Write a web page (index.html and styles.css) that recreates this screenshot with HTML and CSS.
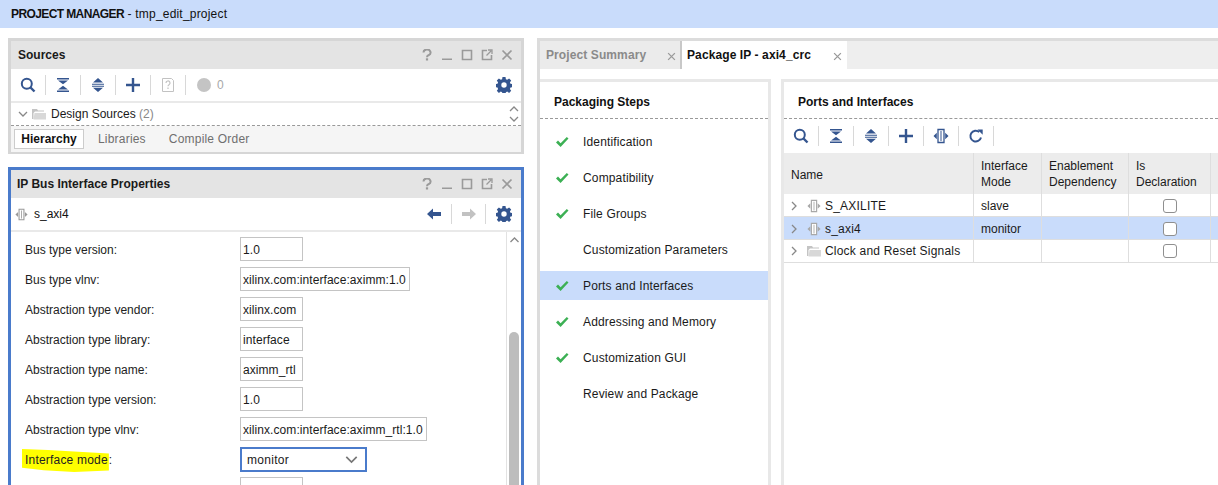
FILE: index.html
```html
<!DOCTYPE html>
<html lang="en">
<head>
  <meta charset="UTF-8" />
  <title>PROJECT MANAGER - tmp_edit_project</title>
  <link rel="stylesheet" href="styles.css">
</head>
<body>
  <svg class="defs" width="0" height="0">
    <symbol id="i-search" viewBox="0 0 16 16"><circle cx="6.8" cy="6.8" r="5" fill="none" stroke="currentColor" stroke-width="2"/><path d="M10.5 10.5l4 4" stroke="currentColor" stroke-width="2.4"/></symbol>
    <symbol id="i-collapse" viewBox="0 0 16 16"><path d="M2 1h12v1.6H2zM3 3.4h10L8 7.3zM8 8.7l5 3.900H3zM2 13.400h12V15H2z" fill="currentColor"/></symbol>
    <symbol id="i-expand" viewBox="0 0 16 16"><path d="M8 1l5 4.600H3zM2 6.800h12v1H2zM2 8.800h12v1H2zM3 10.800h10L8 15z" fill="currentColor"/></symbol>
    <symbol id="i-plus" viewBox="0 0 16 16"><path d="M6.800 1h2.400v5.800H15v2.400H9.200V15H6.800V9.200H1V6.800h5.800z" fill="currentColor"/></symbol>
    <symbol id="i-port" viewBox="0 0 16 16"><path d="M5 1.500h6v13H5z" fill="#fff" stroke="currentColor" stroke-width="1.300"/><path d="M7.500 3h1v10h-1z" fill="currentColor"/><path d="M0.500 8L3.800 4.800v6.400zM15.500 8l-3.300-3.200v6.400z" fill="currentColor"/></symbol>
    <symbol id="i-refresh" viewBox="0 0 16 16"><path d="M13 9.500A5.400 5.400 0 1 1 11.300 4" fill="none" stroke="currentColor" stroke-width="2"/><path d="M9.500 1.500l5.200 0v5.200z" fill="currentColor"/></symbol>
    <symbol id="i-gear" viewBox="0 0 16 16"><path fill-rule="evenodd" fill="currentColor" d="M6.500 0h3l.4 2.200 1.300.6 1.900-1.300 2.100 2.100-1.300 1.900.6 1.300 2.200.4v3l-2.200.4-.6 1.300 1.300 1.900-2.100 2.100-1.900-1.300-1.300.6-.4 2.200h-3l-.4-2.200-1.300-.6-1.900 1.300-2.100-2.100 1.300-1.900-.6-1.300-2.200-.4v-3l2.200-.4.6-1.300-1.300-1.900 2.100-2.100 1.900 1.300 1.300-.6zM8 5.300a2.700 2.700 0 1 0 0 5.400 2.700 2.700 0 0 0 0-5.400z"/></symbol>
    <symbol id="i-left" viewBox="0 0 16 16"><path d="M1 8l6-5.500V6h8v4H7v3.500z" fill="currentColor"/></symbol>
    <symbol id="i-right" viewBox="0 0 16 16"><path d="M15 8L9 2.500V6H1v4h8v3.500z" fill="currentColor"/></symbol>
    <symbol id="i-doc" viewBox="0 0 16 16"><path d="M2.500 1.500h9l2 2v11h-11z" fill="none" stroke="currentColor"/><path d="M6 6a2 2 0 1 1 3 1.700c-.7.4-1 .8-1 1.600M8 10.500v1.500" fill="none" stroke="currentColor" stroke-width="1.200"/></symbol>
    <symbol id="i-down" viewBox="0 0 10 10"><path d="M1 3l4 4 4-4" fill="none" stroke="currentColor" stroke-width="1.300"/></symbol>
    <symbol id="i-up" viewBox="0 0 10 10"><path d="M1 7l4-4 4 4" fill="none" stroke="currentColor" stroke-width="1.300"/></symbol>
    <symbol id="i-next" viewBox="0 0 10 10"><path d="M3 1l4 4-4 4" fill="none" stroke="currentColor" stroke-width="1.300"/></symbol>
    <symbol id="i-folder" viewBox="0 0 14 12"><path d="M0 1h5l1 1.500h6v1H3L1.500 5v6H0z" fill="#c4c4c4"/><path d="M2.500 5h11.500v6.500H1.500z" fill="#d8d8d8"/></symbol>
    <symbol id="i-check" viewBox="0 0 14 12"><path d="M1 6.500l2-2 2.600 2.800L11.800 1 13.500 2.500 5.600 11z" fill="#3cb054"/></symbol>
    <symbol id="i-q" viewBox="0 0 12 12"><path d="M2.500 3.500a3.500 3 0 1 1 5 2.700C6.500 6.800 6 7.300 6 8.300" fill="none" stroke="currentColor" stroke-width="2"/><path d="M4.900 9.300h2.200v2.200H4.900z" fill="currentColor"/></symbol>
    <symbol id="i-min" viewBox="0 0 12 12"><path d="M1 9.500h10v1.500H1z" fill="currentColor"/></symbol>
    <symbol id="i-max" viewBox="0 0 12 12"><path d="M1.500 1.500h9v9h-9z" fill="none" stroke="currentColor" stroke-width="1.600"/></symbol>
    <symbol id="i-float" viewBox="0 0 12 12"><path d="M6 1.500H1.500v9h9V6" fill="none" stroke="currentColor" stroke-width="1.600"/><path d="M5.500 6.500L10 2M7 1h4v4" fill="none" stroke="currentColor" stroke-width="1.300"/></symbol>
    <symbol id="i-close" viewBox="0 0 12 12"><path d="M1.500 1.500l9 9M10.500 1.500l-9 9" fill="none" stroke="currentColor" stroke-width="1.700"/></symbol>
  </svg>

  <div class="topbar"><b>PROJECT MANAGER</b> - tmp_edit_project</div>

  <div class="main">
    <div class="left-col">
      <section class="panel sources">
        <div class="panel-head">
          <span class="panel-title">Sources</span>
          <span class="win-btns">
            <svg><use href="#i-q"/></svg><svg><use href="#i-min"/></svg><svg><use href="#i-max"/></svg><svg><use href="#i-float"/></svg><svg><use href="#i-close"/></svg>
          </span>
        </div>
        <div class="toolbar">
          <span class="tool"><svg><use href="#i-search"/></svg></span>
          <span class="tool"><svg><use href="#i-collapse"/></svg></span>
          <span class="tool"><svg><use href="#i-expand"/></svg></span>
          <span class="tool"><svg><use href="#i-plus"/></svg></span>
          <span class="tool off"><svg><use href="#i-doc"/></svg></span>
          <span class="status"><i class="dot"></i>0</span>
          <span class="tool gear"><svg><use href="#i-gear"/></svg></span>
        </div>
        <div class="tree-row">
          <svg class="chev"><use href="#i-down"/></svg>
          <svg class="folder"><use href="#i-folder"/></svg>
          <span>Design Sources <span class="muted">(2)</span></span>
          <span class="mini-scroll"><svg><use href="#i-up"/></svg><svg><use href="#i-down"/></svg></span>
        </div>
        <div class="subtabs">
          <span class="subtab on">Hierarchy</span>
          <span class="subtab">Libraries</span>
          <span class="subtab">Compile Order</span>
        </div>
      </section>

      <section class="panel props-panel">
        <div class="panel-head">
          <span class="panel-title">IP Bus Interface Properties</span>
          <span class="win-btns">
            <svg><use href="#i-q"/></svg><svg><use href="#i-min"/></svg><svg><use href="#i-max"/></svg><svg><use href="#i-float"/></svg><svg><use href="#i-close"/></svg>
          </span>
        </div>
        <div class="toolbar obj-bar">
          <svg class="port"><use href="#i-port"/></svg>
          <span class="obj-name">s_axi4</span>
          <span class="tool nav first"><svg><use href="#i-left"/></svg></span>
          <span class="tool nav off"><svg><use href="#i-right"/></svg></span>
          <span class="tool nav last"><svg><use href="#i-gear"/></svg></span>
        </div>
        <div class="props-wrap">
          <div class="props">
            <div class="prop"><label>Bus type version:</label><div class="field">1.0</div></div>
            <div class="prop"><label>Bus type vlnv:</label><div class="field wide">xilinx.com:interface:aximm:1.0</div></div>
            <div class="prop"><label>Abstraction type vendor:</label><div class="field">xilinx.com</div></div>
            <div class="prop"><label>Abstraction type library:</label><div class="field">interface</div></div>
            <div class="prop"><label>Abstraction type name:</label><div class="field">aximm_rtl</div></div>
            <div class="prop"><label>Abstraction type version:</label><div class="field">1.0</div></div>
            <div class="prop"><label>Abstraction type vlnv:</label><div class="field wider">xilinx.com:interface:aximm_rtl:1.0</div></div>
            <div class="prop"><label><span class="hl">Interface mode</span>:</label><div class="select">monitor<svg><use href="#i-down"/></svg></div></div>
            <div class="prop"><label></label><div class="field"></div></div>
          </div>
          <div class="vscroll">
            <svg><use href="#i-up"/></svg>
            <div class="thumb"></div>
          </div>
        </div>
      </section>
    </div>

    <div class="right-col">
      <div class="tabstrip">
        <span class="tab">Project Summary<svg><use href="#i-close"/></svg></span>
        <span class="tab on">Package IP - axi4_crc<svg><use href="#i-close"/></svg></span>
      </div>
      <div class="work">
        <div class="steps">
          <h3 class="sec-title">Packaging Steps</h3>
          <ul class="step-list">
            <li><svg><use href="#i-check"/></svg>Identification</li>
            <li><svg><use href="#i-check"/></svg>Compatibility</li>
            <li><svg><use href="#i-check"/></svg>File Groups</li>
            <li>Customization Parameters</li>
            <li class="on"><svg><use href="#i-check"/></svg>Ports and Interfaces</li>
            <li><svg><use href="#i-check"/></svg>Addressing and Memory</li>
            <li><svg><use href="#i-check"/></svg>Customization GUI</li>
            <li>Review and Package</li>
          </ul>
        </div>
        <div class="ports">
          <h3 class="sec-title">Ports and Interfaces</h3>
          <div class="toolbar ports-bar">
            <span class="tool"><svg><use href="#i-search"/></svg></span>
            <span class="tool"><svg><use href="#i-collapse"/></svg></span>
            <span class="tool"><svg><use href="#i-expand"/></svg></span>
            <span class="tool"><svg><use href="#i-plus"/></svg></span>
            <span class="tool"><svg><use href="#i-port"/></svg></span>
            <span class="tool"><svg><use href="#i-refresh"/></svg></span>
          </div>
          <div class="grid head">
            <div class="one">Name</div><div>Interface<br>Mode</div><div>Enablement<br>Dependency</div><div>Is<br>Declaration</div><div class="rest"></div>
          </div>
          <div class="grid row">
            <div class="name"><svg class="chev"><use href="#i-next"/></svg><svg class="port"><use href="#i-port"/></svg>S_AXILITE</div><div>slave</div><div></div><div class="mid"><i class="box"></i></div><div class="rest"></div>
          </div>
          <div class="grid row on">
            <div class="name"><svg class="chev"><use href="#i-next"/></svg><svg class="port"><use href="#i-port"/></svg>s_axi4</div><div>monitor</div><div></div><div class="mid"><i class="box"></i></div><div class="rest"></div>
          </div>
          <div class="grid row">
            <div class="name"><svg class="chev"><use href="#i-next"/></svg><svg class="folder"><use href="#i-folder"/></svg>Clock and Reset Signals</div><div></div><div></div><div class="mid"><i class="box"></i></div><div class="rest"></div>
          </div>
        </div>
      </div>
    </div>
  </div>
</body>
</html>
```

FILE: styles.css
```css
* { box-sizing:border-box; }
html, body { height:485px; overflow:hidden; }
body { margin:0; background:#fff; color:#1a1a1a; font-family:"Liberation Sans", Arial, sans-serif; font-size:12px; }
svg { display:block; }
.defs { position:absolute; }

.topbar { height:28px; padding-left:11px; line-height:29px; background:#c9dcfb; color:#111; letter-spacing:.2px; }
.topbar b { letter-spacing:-.6px; }
.main { display:flex; padding-top:10px; height:457px; overflow:hidden; }

/* left column */
.left-col { width:516px; flex:none; margin-left:8px; display:flex; flex-direction:column; gap:13px; }
.panel { border:3px solid #d6d6d6; background:#fff; }
.sources { height:116px; flex:none; }
.props-panel { border-color:#4a7bcb; border-bottom:0; flex:1; min-height:0; display:flex; flex-direction:column; }
.panel-head { height:28px; flex:none; display:flex; align-items:center; justify-content:space-between; background:#e4e4e4; padding-left:7px; }
.props-panel .panel-head { padding-left:6px; }
.panel-title { font-weight:bold; }
.win-btns { display:flex; gap:8px; padding-right:8px; color:#9a9a9a; }
.win-btns svg { width:12px; height:12px; }

.toolbar { height:32px; flex:none; display:flex; align-items:center; color:#34558f; }
.tool { width:35px; height:20px; display:flex; align-items:center; justify-content:center; border-right:1px solid #d8d8d8; }
.tool svg { width:16px; height:16px; }
.tool.off { color:#c2c2c2; }
.status { display:flex; align-items:center; gap:6px; padding-left:11px; color:#a8a8a8; }
.dot { width:14px; height:14px; border-radius:50%; background:#c4c4c4; }
.tool.gear, .tool.last { border:0; }
.tool.gear { margin-left:auto; }

.tree-row { height:23px; margin-top:2px; box-shadow:0 -2px 0 #e9e9e9; border-bottom:1px dashed #999; display:flex; align-items:center; padding-left:7px; }
.chev { width:10px; height:10px; color:#888; margin-right:4px; }
.folder { width:14px; height:12px; margin-right:5px; }
.muted { color:#888; }
.mini-scroll { margin-left:auto; width:13px; color:#888; margin-right:-1px; }
.mini-scroll svg { width:10px; height:10px; }
.subtabs { height:26px; padding:3px; background:#f5f5f5; display:flex; color:#6f6f6f; letter-spacing:.2px; }
.subtab { padding:0 11.5px; line-height:20px; }
.subtab.on { width:70px; padding:0; margin-right:2.5px; line-height:18px; text-align:center; font-weight:bold; letter-spacing:0; color:#111; background:#fff; border:1px solid #ccc; }

.obj-bar { padding-left:4px; }
.obj-bar .port { width:13px; height:13px; color:#999; margin-right:6px; }
.obj-name { flex:1; color:#111; }
.tool.nav { width:34px; }
.tool.nav.first { padding-right:2px; }
.tool.nav.last { width:35px; justify-content:flex-end; padding-right:9px; }
.props-wrap { display:flex; flex:1; min-height:0; overflow:hidden; margin-top:2px; box-shadow:0 -2px 0 #e9e9e9; }
.props { flex:1; padding:5px 0 0 14px; display:flex; flex-direction:column; gap:6px; overflow:hidden; }
.prop { display:flex; align-items:center; height:24px; flex:none; }
.prop label { width:215px; padding-top:2px; color:#222; }
.field { width:63px; height:24px; line-height:24px; padding-left:2px; letter-spacing:.07px; border:1px solid #c4c4c4; white-space:nowrap; overflow:hidden; }
.field.wide { width:170px; }
.field.wider { width:187px; }
.select { width:127px; height:25px; margin-top:1px; padding:0 7px 0 5px; letter-spacing:.3px; border:2px solid #4a7bcb; display:flex; align-items:center; justify-content:space-between; }
.select svg { width:13px; height:13px; color:#777; }
.hl { background:#ffff00; padding:4px 1px 5px 3px; margin-left:-3px; letter-spacing:.2px; clip-path:polygon(0 0, 30% 4%, 100% 20%, 100% 94%, 60% 100%, 25% 92%, 0 82%); }
.vscroll { width:15px; border-left:1px solid #e2e2e2; color:#888; padding:3px 0 0 2px; display:flex; flex-direction:column; }
.vscroll svg { width:11px; height:10px; flex:none; }
.thumb { width:10px; flex:1; margin-top:87px; background:#bdbdbd; border-radius:5px 5px 0 0; }

/* right column */
.right-col { flex:1; min-width:0; margin-left:13px; border-left:3px solid #dcdcdc; border-top:3px solid #dcdcdc; }
.tabstrip { height:28px; display:flex; background:#eee; }
.tab { width:140px; display:flex; align-items:center; justify-content:space-between; padding:0 4px 0 6px; font-weight:bold; letter-spacing:.1px; color:#8a8a8a; background:#ebebeb; }
.tab svg { width:9px; height:9px; color:#999; margin-top:2px; }
.tab.on { width:167px; color:#111; background:#fff; border-left:2px solid #c8c8c8; padding:0 5px 0 5px; }
.work { display:flex; gap:10px; margin-top:10px; height:406px; }
.steps { width:231px; border-top:3px solid #e8e8e8; border-right:3px solid #e8e8e8; flex:none; }
.ports { flex:1; min-width:0; border-top:3px solid #e8e8e8; border-left:3px solid #e8e8e8; }
.sec-title { height:37px; margin:0; font-size:12px; line-height:41px; padding-left:14px; border-bottom:1px dashed #999; color:#111; }
.step-list { list-style:none; margin:8px 0 0; padding:0; letter-spacing:.15px; }
.step-list li { height:29px; margin-bottom:7px; display:flex; align-items:center; padding-left:43px; position:relative; }
.step-list li svg { position:absolute; left:15px; width:14px; height:12px; }
.step-list li.on { background:#c9dcfb; }

.ports-bar { height:34px; }
.grid { display:grid; grid-template-columns:190px 68px 87px 82px 1fr; }
.grid > div { border-right:1px solid #dedede; padding-left:7px; }
.grid > .rest { padding:0; border:0; }
.head { height:41px; background:#ececec; align-items:stretch; line-height:16px; }
.head > div { display:flex; align-items:center; }
.head > .one { padding-top:2px; }
.row { height:23px; border-bottom:1px solid #dedede; line-height:23px; }
.row > div { padding-top:1px; }
.row.on { background:#c9dcfb; }
.grid > .name { display:flex; align-items:center; padding:0 0 0 5px; letter-spacing:.2px; line-height:22px; }
.name .chev { margin-right:6px; }
.name .port { width:14px; height:14px; color:#a8a8a8; margin:0 4px 0 2px; }
.name .folder { margin:0 4px 0 2px; }
.grid > .mid { padding:0; display:flex; align-items:center; justify-content:center; }
.box { width:14px; height:14px; border:1px solid #8f8f8f; border-radius:3px; background:#fff; }
```
